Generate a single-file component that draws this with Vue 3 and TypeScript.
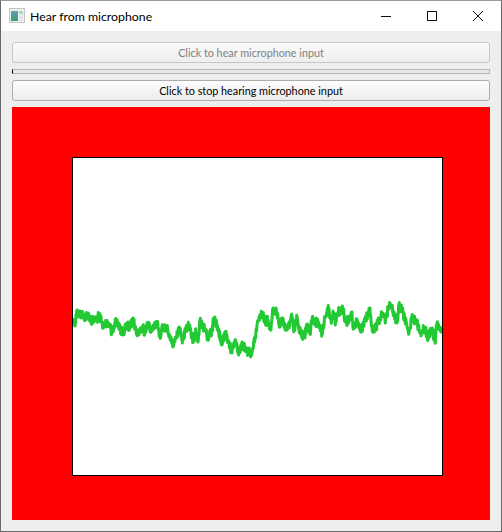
<script setup lang="ts">
const anchors: [number, number][] = [
  [74,318],[75,326],[77,310],[80,317],[82,312],[85,318],[88,315],[90,320],[92,322],[95,317],[97,319],[99,314],[103,325],[105,324],[108,322],[110,326],[112,333],[115,322],[118,325],[120,329],[123,333],[127,323],[129,330],[133,318],[137,335],[142,327],[145,332],[148,324],[152,331],[157,322],[160,337],[163,327],[168,330],[173,347],[176,338],[179,327],[182,340],[186,330],[189,325],[193,342],[196,332],[198,342],[200,322],[205,330],[208,338],[212,331],[214,318],[218,328],[222,345],[225,332],[228,340],[232,353],[235,340],[238,353],[243,345],[247,352],[252,353],[255,337],[258,322],[262,313],[265,322],[268,320],[271,330],[273,308],[277,313],[280,327],[282,318],[287,330],[292,316],[294,330],[297,318],[299,330],[304,337],[308,325],[310,332],[312,320],[315,323],[318,322],[322,333],[325,318],[328,308],[331,320],[334,313],[335,323],[338,312],[343,309],[346,323],[352,312],[353,328],[357,320],[361,331],[365,320],[370,308],[372,328],[376,328],[378,322],[383,313],[385,320],[390,303],[397,323],[399,305],[403,313],[409,332],[412,318],[417,322],[420,333],[425,328],[427,337],[432,330],[435,342],[437,323],[442,333],
];

// Deterministic jitter gives the trace its sampled, noisy look.
const jitter = (n: number): number => {
  const v = Math.sin(n * 127.1) * 43758.5453;
  return (v - Math.floor(v) - 0.5) * 9;
};

const points = anchors
  .flatMap(([x, y], i) => {
    const next = anchors[i + 1];
    if (!next) return [[x, y]];
    const out: number[][] = [[x, y]];
    for (let s = x * 3 + 1; s < next[0] * 3; s++) {
      const px = s / 3;
      const t = (px - x) / (next[0] - x);
      out.push([px, y + (next[1] - y) * t + jitter(s)]);
    }
    return out;
  })
  .map(([x, y]) => `${(x - 73).toFixed(2)},${(y - 158).toFixed(1)}`)
  .join(' ');
</script>

<template>
  <div class="window">
    <header class="titlebar">
      <svg class="app-icon" viewBox="0 0 16 16" width="16" height="16">
        <defs>
          <linearGradient id="pane" x1="0" y1="0" x2="0" y2="1">
            <stop offset="0" stop-color="#5f9fb5" />
            <stop offset="1" stop-color="#3f9a78" />
          </linearGradient>
        </defs>
        <rect x="0.5" y="0.5" width="15" height="14" fill="#eef0f0" stroke="#c4c6c6" />
        <rect x="2" y="3" width="7" height="10" fill="url(#pane)" />
        <rect x="10" y="3" width="4" height="3" fill="#a9d8c4" />
        <rect x="10" y="7" width="4" height="6" fill="#e2e6e6" />
      </svg>
      <span class="title">Hear from microphone</span>
      <div class="controls">
        <button class="control" aria-label="Minimize">
          <svg viewBox="0 0 10 10" width="10" height="10"><path d="M0 5.5H10" stroke="#111" /></svg>
        </button>
        <button class="control" aria-label="Maximize">
          <svg viewBox="0 0 10 10" width="10" height="10"><rect x="0.5" y="0.5" width="9" height="9" fill="none" stroke="#111" /></svg>
        </button>
        <button class="control" aria-label="Close">
          <svg viewBox="0 0 10 10" width="10" height="10"><path d="M0 0L10 10M10 0L0 10" stroke="#111" stroke-width="1" /></svg>
        </button>
      </div>
    </header>

    <main class="content">
      <button class="action" disabled>Click to hear microphone input</button>
      <div class="progress"></div>
      <button class="action">Click to stop hearing microphone input</button>
      <div class="stage">
        <svg class="plot" viewBox="0 0 369 317" width="371" height="319">
          <polyline :points="points" fill="none" stroke="#22c933" stroke-width="3" stroke-linejoin="round" />
        </svg>
      </div>
    </main>
  </div>
</template>

<style scoped>
.window {
  width: 502px;
  height: 532px;
  box-sizing: border-box;
  border: 1px solid #6a6a6a;
  border-top-color: #9a9a9a;
  display: flex;
  flex-direction: column;
  background: #eeeeee;
  font-family: Lato, "Noto Sans", sans-serif;
  overflow: hidden;
}
.titlebar {
  height: 30px;
  flex: none;
  display: flex;
  align-items: center;
  background: #ffffff;
  padding-left: 8px;
}
.app-icon {
  flex: none;
  margin-top: -1px;
}
.title {
  margin-left: 5px;
  font-size: 12.3px;
  color: #000;
  white-space: nowrap;
}
.controls {
  margin-left: auto;
  display: flex;
  align-self: stretch;
}
.control {
  width: 46px;
  border: 0;
  padding: 0;
  background: none;
  display: flex;
  align-items: center;
  justify-content: center;
}
.content {
  flex: 1;
  min-height: 0;
  padding: 11px;
  display: flex;
  flex-direction: column;
  gap: 6px;
}
.action {
  height: 21px;
  flex: none;
  box-sizing: border-box;
  border: 1px solid #adadad;
  border-radius: 3px;
  padding: 0;
  background: linear-gradient(#fdfdfd, #ececec);
  color: #000;
  font: inherit;
  font-size: 10.8px;
}
.action:disabled {
  border-color: #c6c6c6;
  color: #808080;
  background: linear-gradient(#fafafa, #eeeeee);
}
.progress {
  height: 5px;
  flex: none;
  box-sizing: border-box;
  border: 1px solid #b4b4b4;
  border-left-color: #000;
  background: #e8e8e8;
}
.stage {
  flex: 1;
  min-height: 0;
  background: #ff0000;
  padding: 50px 47px 44px 60px;
}
.plot {
  display: block;
  box-sizing: border-box;
  border: 1px solid #000;
  background: #ffffff;
}
</style>
